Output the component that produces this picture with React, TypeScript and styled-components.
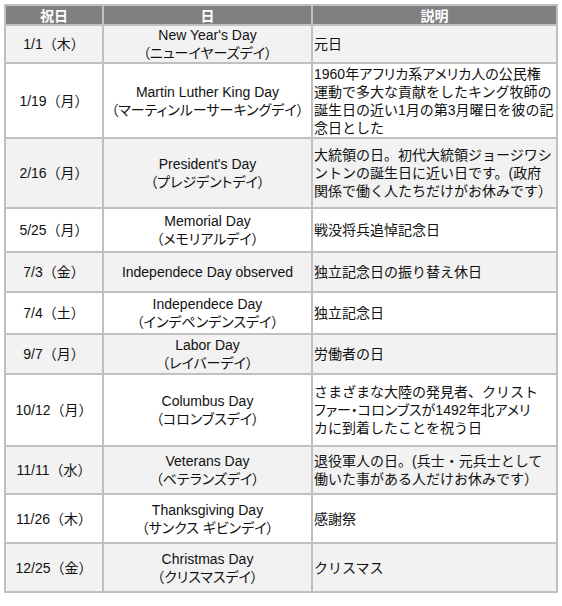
import React from 'react';
import styled, { createGlobalStyle } from 'styled-components';

const GlobalStyle = createGlobalStyle`
  body {
    margin: 0;
    background: #ffffff;
    font-family: "Liberation Sans", Arial, "Noto Sans CJK JP", sans-serif;
  }
`;

const Page = styled.div`
  padding: 4px;
`;

const Table = styled.table`
  width: 554px;
  table-layout: fixed;
  border-collapse: separate;
  border-spacing: 2px;
  background: #c0c0c0;
  font-size: 14px;
  line-height: 18px;
  color: #111;
`;

const HeadCell = styled.th<{ $w: number }>`
  width: ${p => p.$w}px;
  height: 18px;
  padding: 0;
  background: #808080;
  color: #ffffff;
  font-family: "Noto Sans CJK JP", sans-serif;
  font-weight: 700;
  font-size: 14px;
  line-height: 18px;
  text-align: center;
`;

const Row = styled.tr<{ $h: number; $shaded: boolean }>`
  height: ${p => p.$h}px;
  background: ${p => (p.$shaded ? '#f2f2f2' : '#ffffff')};
`;

const DateCell = styled.td`
  padding: 0;
  text-align: center;
  vertical-align: middle;
  white-space: nowrap;
`;

const NameCell = styled.td`
  padding: 0;
  text-align: center;
  vertical-align: middle;
  white-space: nowrap;
  font-feature-settings: "palt";
`;

const NoteCell = styled.td`
  padding: 0 1px;
  text-align: left;
  vertical-align: middle;
`;

const Line = styled.div<{ $tight?: boolean }>`
  white-space: nowrap;
  font-feature-settings: ${p => (p.$tight ? '"palt"' : 'normal')};
`;

interface Holiday {
  date: string;
  name: string;
  kana?: string;
  note: string[];
  h: number;
}

const holidays: Holiday[] = [
  { date: '1/1（木）', name: "New Year's Day", kana: '（ニューイヤーズデイ）', note: ['元日'], h: 36 },
  {
    date: '1/19（月）',
    name: 'Martin Luther King Day',
    kana: '（マーティンルーサーキングデイ）',
    note: [
      '1960年アフリカ系アメリカ人の公民権',
      '運動で多大な貢献をしたキング牧師の',
      '誕生日の近い1月の第3月曜日を彼の記',
      '念日とした',
    ],
    h: 73,
  },
  {
    date: '2/16（月）',
    name: "President's Day",
    kana: '（プレジデントデイ）',
    note: [
      '大統領の日。初代大統領ジョージワシ',
      'ントンの誕生日に近い日です。(政府',
      '関係で働く人たちだけがお休みです）',
    ],
    h: 68,
  },
  { date: '5/25（月）', name: 'Memorial Day', kana: '（メモリアルデイ）', note: ['戦没将兵追悼記念日'], h: 42 },
  { date: '7/3（金）', name: 'Independece Day observed', note: ['独立記念日の振り替え休日'], h: 38 },
  { date: '7/4（土）', name: 'Independece Day', kana: '（インデペンデンスデイ）', note: ['独立記念日'], h: 40 },
  { date: '9/7（月）', name: 'Labor Day', kana: '（レイバーデイ）', note: ['労働者の日'], h: 38 },
  {
    date: '10/12（月）',
    name: 'Columbus Day',
    kana: '（コロンブスデイ）',
    note: [
      'さまざまな大陸の発見者、クリスト',
      'ファー・コロンブスが1492年北アメリ',
      'カに到着したことを祝う日',
    ],
    h: 70,
  },
  {
    date: '11/11（水）',
    name: 'Veterans Day',
    kana: '（ベテランズデイ）',
    note: ['退役軍人の日。(兵士・元兵士として', '働いた事がある人だけお休みです）'],
    h: 46,
  },
  { date: '11/26（木）', name: 'Thanksgiving Day', kana: '（サンクス ギビンデイ）', note: ['感謝祭'], h: 47 },
  { date: '12/25（金）', name: 'Christmas Day', kana: '（クリスマスデイ）', note: ['クリスマス'], h: 47 },
];

// lines wider than the column at full-width spacing get proportional kana
const isWide = (l: string) => {
  let w = 0;
  for (const c of l) w += c.charCodeAt(0) < 0x100 ? 7.8 : 14;
  return w > 240;
};

export default function App() {
  return (
    <Page>
      <GlobalStyle />
      <Table>
        <thead>
          <tr>
            <HeadCell $w={96}>祝日</HeadCell>
            <HeadCell $w={207}>日</HeadCell>
            <HeadCell $w={243}>説明</HeadCell>
          </tr>
        </thead>
        <tbody>
          {holidays.map((d, i) => (
            <Row key={d.date} $h={d.h} $shaded={i % 2 === 0}>
              <DateCell>{d.date}</DateCell>
              <NameCell>
                <Line $tight>{d.name}</Line>
                {d.kana && <Line $tight>{d.kana}</Line>}
              </NameCell>
              <NoteCell>
                {d.note.map(l => (
                  <Line key={l} $tight={isWide(l)}>
                    {l}
                  </Line>
                ))}
              </NoteCell>
            </Row>
          ))}
        </tbody>
      </Table>
    </Page>
  );
}
